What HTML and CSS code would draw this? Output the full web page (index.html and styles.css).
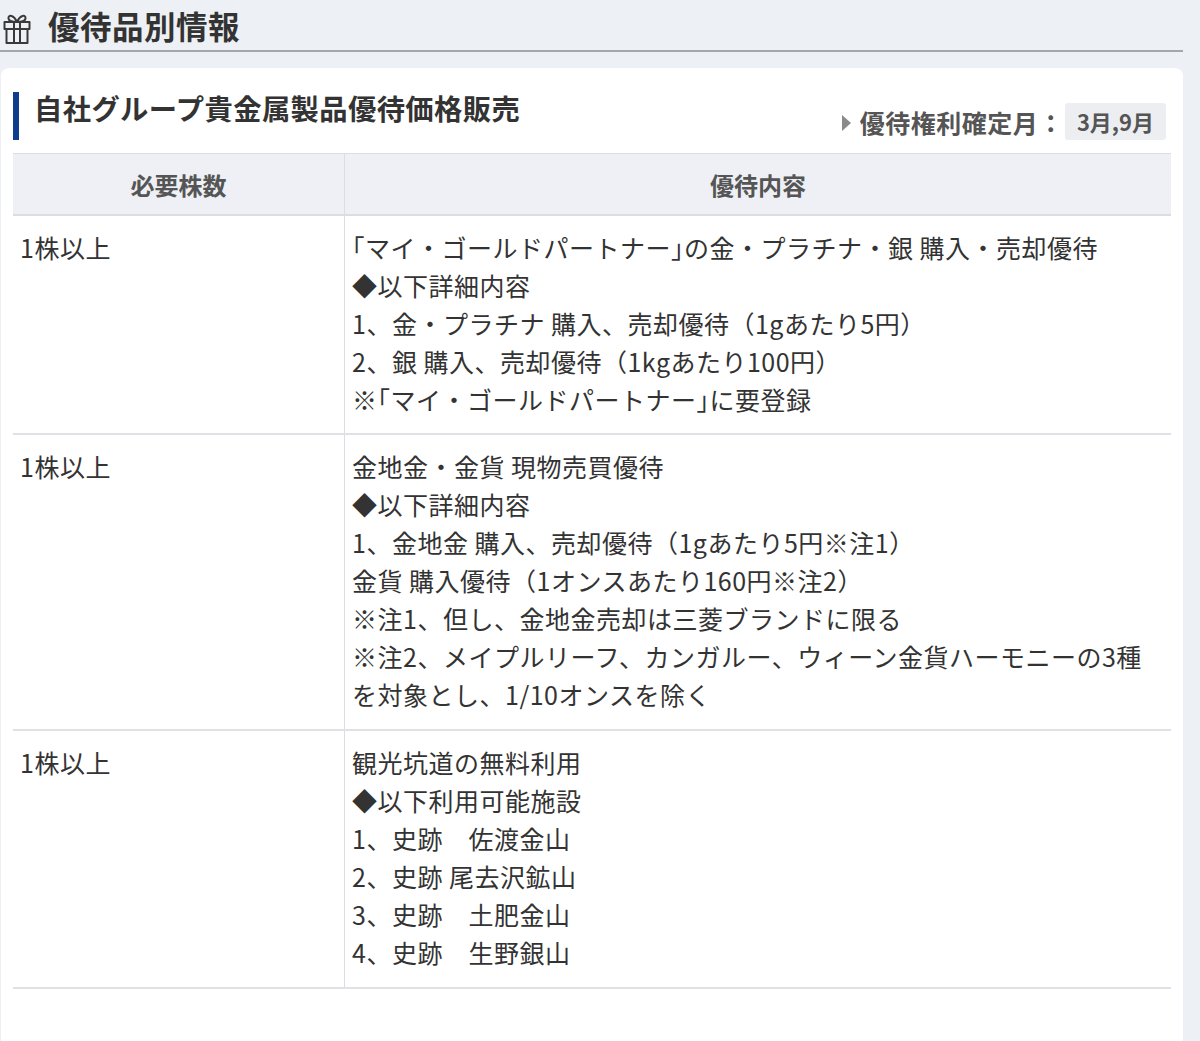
FILE: index.html
```html
<!DOCTYPE html>
<html lang="ja">
<head>
<meta charset="utf-8">
<title>優待品別情報</title>
<link rel="stylesheet" href="styles.css">
</head>
<body>
<div class="page">
  <div class="section-title">
    <svg class="gift" width="28" height="32" viewBox="0 0 28 32" fill="none" stroke="#3a3a3a" stroke-width="2" stroke-linejoin="round">
      <path d="M14 10 C11 3, 5 2, 5.5 6.5 C6 9.5, 10 10, 14 10 Z"/>
      <path d="M14 10 C17 3, 23 2, 22.5 6.5 C22 9.5, 18 10, 14 10 Z"/>
      <rect x="1.5" y="10" width="25" height="7"/>
      <rect x="3.5" y="17" width="21" height="14"/>
      <path d="M11 10V31M17 10V31"/>
    </svg>
    <h2>優待品別情報</h2>
  </div>

  <div class="card">
    <div class="card-head">
      <h3>自社グループ貴金属製品優待価格販売</h3>
      <div class="kenri">
        <span class="tri"></span>
        <span class="kenri-label">優待権利確定月：</span>
        <span class="badge">3月,9月</span>
      </div>
    </div>

    <table class="yutai">
      <thead>
        <tr><th class="c1">必要株数</th><th class="c2">優待内容</th></tr>
      </thead>
      <tbody>
        <tr>
          <td class="c1">1株以上</td>
          <td class="c2">｢マイ・ゴールドパートナー｣の金・プラチナ・銀 購入・売却優待<br>◆以下詳細内容<br>1、金・プラチナ 購入、売却優待（1gあたり5円）<br>2、銀 購入、売却優待（1kgあたり100円）<br>※｢マイ・ゴールドパートナー｣に要登録</td>
        </tr>
        <tr>
          <td class="c1">1株以上</td>
          <td class="c2">金地金・金貨 現物売買優待<br>◆以下詳細内容<br>1、金地金 購入、売却優待（1gあたり5円※注1）<br>金貨 購入優待（1オンスあたり160円※注2）<br>※注1、但し、金地金売却は三菱ブランドに限る<br>※注2、メイプルリーフ、カンガルー、ウィーン金貨ハーモニーの3種を対象とし、1/10オンスを除く</td>
        </tr>
        <tr>
          <td class="c1">1株以上</td>
          <td class="c2">観光坑道の無料利用<br>◆以下利用可能施設<br>1、史跡　佐渡金山<br>2、史跡 尾去沢鉱山<br>3、史跡　土肥金山<br>4、史跡　生野銀山</td>
        </tr>
      </tbody>
    </table>
  </div>
</div>
</body>
</html>
```
FILE: styles.css
```css
html, body {
  margin: 0;
  padding: 0;
  background: #edf0f4;
}
body {
  font-family: "Noto Sans CJK JP", "Noto Sans", sans-serif;
  color: #333;
}
.page {
  width: 1183px;
}
.section-title {
  display: flex;
  align-items: center;
  height: 50px;
  padding-left: 3px;
  border-bottom: 2px solid #a5a7aa;
}
.gift {
  flex: none;
  margin-top: 6px;
}
.section-title h2 {
  margin: 0 0 0 17px;
  font-size: 31.5px;
  font-weight: 700;
  line-height: 40px;
  color: #333;
  letter-spacing: 0.5px;
}
.card {
  margin-top: 16px;
  margin-left: 1px;
  background: #fff;
  border-radius: 8px;
  padding: 24px 12px 80px 12px;
}
.card-head {
  display: flex;
  justify-content: space-between;
  align-items: flex-end;
  margin-bottom: 13px;
}
.card-head h3 {
  margin: 0;
  height: 48px;
  border-left: 6px solid #0f3d8c;
  padding-left: 15px;
  font-size: 28.3px;
  font-weight: 700;
  line-height: 32px;
  color: #333;
  letter-spacing: 0.4px;
}
.kenri {
  display: flex;
  align-items: center;
  margin-right: 5px;
}
.tri {
  width: 0;
  height: 0;
  border-top: 8px solid transparent;
  border-bottom: 8px solid transparent;
  border-left: 9px solid #8a8a8a;
  margin-right: 9px;
  margin-top: 2px;
}
.kenri-label {
  font-size: 25px;
  font-weight: 700;
  color: #555;
  letter-spacing: 0.5px;
}
.badge {
  margin-left: 1px;
  background: #eceef2;
  border-radius: 3px;
  height: 37px;
  line-height: 37px;
  padding: 0 12px;
  font-size: 22px;
  font-weight: 700;
  color: #555;
}
.yutai {
  width: 100%;
  border-collapse: collapse;
}
.yutai th {
  background: #eef0f5;
  height: 60px;
  padding: 0;
  font-size: 24px;
  font-weight: 700;
  color: #555;
  text-align: center;
  border-top: 1px solid #dcdde0;
  border-bottom: 2px solid #dcdde0;
}
.yutai .c1 {
  width: 316px;
  border-right: 1px solid #dcdde0;
}
.yutai td {
  vertical-align: top;
  padding: 12px 8px 16px 7px;
  font-size: 25px;
  line-height: 38px;
  color: #333;
  letter-spacing: 0.5px;
  border-bottom: 2px solid #e0e1e4;
}
.yutai tbody tr:first-child td {
  padding-bottom: 15px;
}
```
